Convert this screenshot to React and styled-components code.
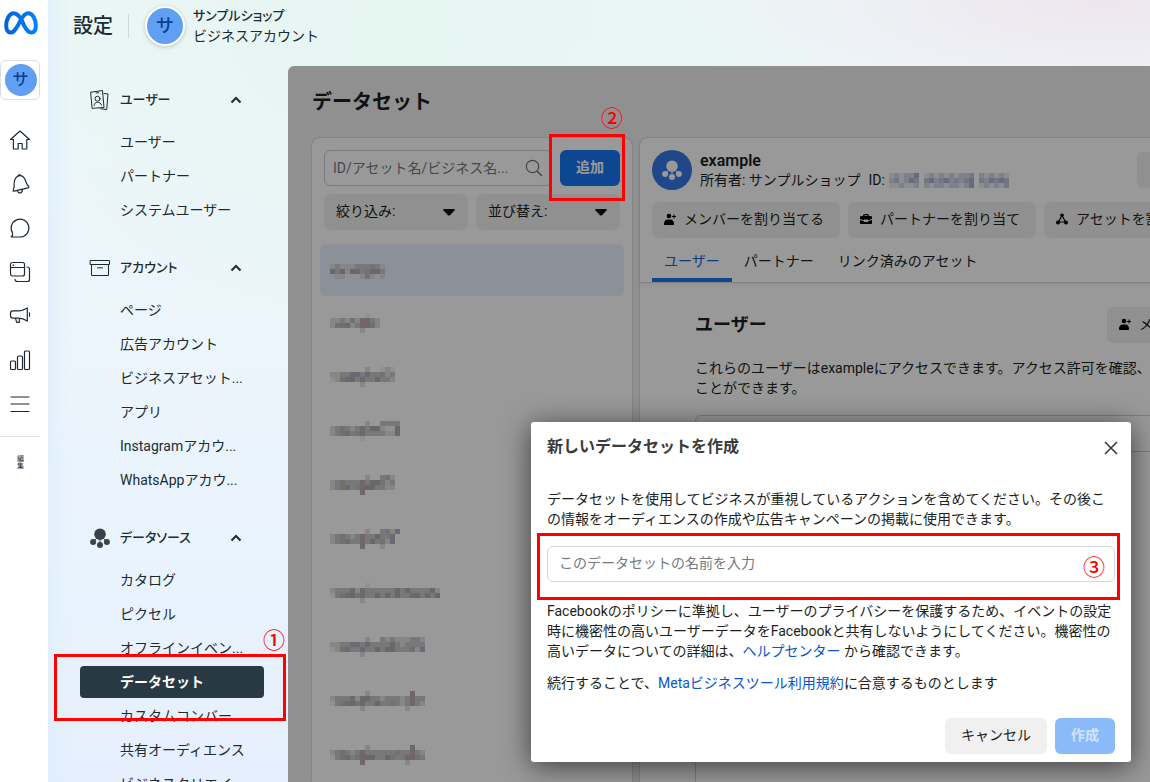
import React from "react";
import styled, { createGlobalStyle, css } from "styled-components";

const Global = createGlobalStyle`
  *, *::before, *::after { box-sizing: border-box; }
  body {
    margin: 0;
    overflow: hidden;
    font-family: Roboto, "Noto Sans CJK JP", sans-serif;
    font-size: 14px;
    line-height: 20px;
    color: #1c2b33;
  }
  button, input, select { font: inherit; color: inherit; margin: 0; }
  h1, h2, h3, p, ul { margin: 0; padding: 0; }
  ul { list-style: none; }
  a { color: #0a55c8; text-decoration: none; }
`;

const Page = styled.div`
  display: flex;
  height: 100vh;
  overflow: hidden;
`;

/* ---------- icon rail ---------- */

const Rail = styled.nav`
  flex: none;
  width: 48px;
  background: #fff;
`;

const RailLogo = styled.a`
  display: flex;
  align-items: center;
  justify-content: center;
  width: 42px;
  height: 46px;
  margin-bottom: 14px;
`;

const RailAccount = styled.button`
  display: grid;
  place-items: center;
  width: 40px;
  height: 40px;
  padding: 0 0 0 1px;
  margin-bottom: 18px;
  border: 1px solid #d9dfe5;
  border-radius: 6px;
  background: #fff;
`;

const Avatar = styled.span`
  display: grid;
  place-items: center;
  flex: none;
  width: ${(p) => p.$size}px;
  height: ${(p) => p.$size}px;
  border-radius: 50%;
  background: #619ff3;
  color: #0a3f94;
  font-size: ${(p) => p.$font}px;
  font-weight: 500;
  ${(p) =>
    p.$ring &&
    css`
      border: 2px solid #fff;
      box-shadow: 0 1px 4px rgba(0, 0, 0, 0.2);
    `}
`;

const RailLink = styled.a`
  display: grid;
  place-items: center;
  width: 40px;
  height: 44px;
  color: #1c2b33;
`;

const RailEdit = styled.button`
  display: block;
  width: 40px;
  padding: 19px 16px 0 17px;
  margin-top: 10px;
  border: 0;
  border-top: 1px solid #e2e5e8;
  background: none;
  font-size: 7px;
  line-height: 7px;
`;

/* ---------- page frame ---------- */

const Main = styled.div`
  display: flex;
  flex-direction: column;
  flex: 1;
  min-width: 0;
  background:
    linear-gradient(90deg, rgba(222, 238, 252, 0.7), rgba(235, 244, 254, 0) 24px),
    radial-gradient(420px 120px at 96% 0, #eee6ee, rgba(238, 230, 238, 0)),
    radial-gradient(460px 300px at 32% 4%, #e5f5f0, rgba(230, 246, 241, 0)),
    linear-gradient(#edf7f8, #ecf5fb 45%, #e9f3fe 75%, #e6effd);
`;

const TopBar = styled.header`
  display: flex;
  align-items: center;
  flex: none;
  height: 66px;
  padding: 0 24px 14px 25px;
`;

const TopTitle = styled.h1`
  padding-right: 15px;
  margin-right: 16px;
  border-right: 1px solid #ccd8de;
  font-size: 20px;
  line-height: 24px;
  font-weight: 500;
`;

const Account = styled.div`
  margin-left: 8px;
  line-height: 20px;
`;

const AccountName = styled.div`
  font-size: 13px;
  font-weight: 500;
  font-feature-settings: "palt";
`;

const Body = styled.div`
  display: flex;
  flex: 1;
  min-height: 0;
`;

/* ---------- settings menu ---------- */

const Menu = styled.nav`
  flex: none;
  width: 240px;
  padding: 8px 24px 0 32px;
`;

const Group = styled.section`
  margin-bottom: 16px;
`;

const GroupHead = styled.button`
  display: flex;
  align-items: center;
  width: 100%;
  height: 50px;
  padding: 1px 22px 0 8px;
  border: 0;
  background: none;
  font-size: 13px;
  font-weight: 500;
  text-align: left;
  font-feature-settings: "palt";

  span { flex: 1; padding-left: 8px; }
`;

const Item = styled.li`
  position: relative;
  padding-top: 2px;
`;

const ItemLink = styled.a`
  display: block;
  height: 32px;
  padding-left: 40px;
  border-radius: 4px;
  line-height: 32px;
  white-space: nowrap;
  color: #1c2b33;
  ${(p) =>
    p.$active &&
    css`
      background: #283943;
      color: #fff;
      font-weight: 700;
    `}
`;

/* ---------- numbered callouts ---------- */

const Callout = styled.div`
  position: absolute;
  z-index: 3;
  inset: ${(p) => p.$inset};
  border: 3px solid #f00;
  pointer-events: none;
`;

const Step = styled.span`
  position: absolute;
  z-index: 3;
  top: ${(p) => p.$top}px;
  right: ${(p) => p.$right}px;
  color: #f00;
  font-family: "Noto Sans CJK JP", sans-serif;
  font-size: 22px;
  line-height: 24px;
  font-weight: 500;
`;

/* ---------- data set panel ---------- */

const Panel = styled.main`
  position: relative;
  flex: 1;
  min-width: 1086px;
  display: flex;
  flex-direction: column;
  padding: 0 12px 0 24px;
  border-top-left-radius: 6px;
  background: #f1f1f1;
  color: #1c1e21;

  &::after {
    content: "";
    position: absolute;
    z-index: 2;
    inset: 0;
    border-top-left-radius: 6px;
    background: rgba(0, 0, 0, 0.4);
  }
`;

const PanelTitle = styled.h2`
  flex: none;
  height: 72px;
  font-size: 20px;
  line-height: 72px;
  font-weight: 700;
`;

const Columns = styled.div`
  display: flex;
  flex: 1;
  gap: 8px;
  min-height: 0;
`;

const Card = styled.section`
  border-radius: 8px 8px 0 0;
  background: #fff;
  box-shadow: 0 0 2px rgba(0, 0, 0, 0.3);
`;

const ListCard = styled(Card)`
  flex: none;
  width: 320px;
  padding: 12px 8px 0;
`;

const SearchRow = styled.div`
  display: flex;
  gap: 8px;
  padding: 0 4px;
`;

const SearchBox = styled.label`
  display: flex;
  align-items: center;
  flex: 1;
  height: 36px;
  padding: 0 8px;
  border: 1px solid #ccd0d5;
  border-radius: 6px;
  color: #70757b;

  input {
    flex: 1;
    min-width: 0;
    padding: 0;
    border: 0;
    outline: 0;
    background: none;
    text-overflow: ellipsis;
  }
  input::placeholder { color: #75797d; opacity: 1; }
`;

const AddWrap = styled.div`
  position: relative;
`;

const Button = styled.button`
  display: flex;
  align-items: center;
  justify-content: ${(p) => (p.$left ? "flex-start" : "center")};
  flex: none;
  gap: 8px;
  width: ${(p) => p.$width}px;
  height: 36px;
  padding: 0 0 2px ${(p) => (p.$left ? 12 : 0)}px;
  border: 0;
  border-radius: 6px;
  background: #f0f0f0;
  white-space: nowrap;
  ${(p) =>
    p.$primary &&
    css`
      background: #1877f2;
      color: #fff;
      font-weight: 700;
    `}
  &:disabled { background: #8bbaf8; color: #d1e3fc; }
`;

const Filters = styled.div`
  display: flex;
  gap: 8px;
  padding: 8px 4px 14px;
`;

const FilterBox = styled.div`
  display: grid;
  flex: 1;
  align-items: center;

  select, svg { grid-area: 1 / 1; }
  select {
    appearance: none;
    width: 100%;
    height: 36px;
    padding: 0 12px 2px;
    border: 0;
    border-radius: 6px;
    background: #f0f0f0;
  }
  svg { justify-self: end; margin-right: 13px; pointer-events: none; }
`;

const Asset = styled.li`
  height: 52px;
  margin-bottom: 2px;
  padding: 15px 10px;
  border-radius: 6px;
  background: ${(p) => (p.$active ? "#e9f1ff" : "none")};

  svg { display: block; }
`;

/* ---------- detail card ---------- */

const DetailCard = styled(Card)`
  flex: 1;
  min-width: 0;
`;

const DetailHead = styled.div`
  padding: 12px 12px 0;
  border-bottom: 1px solid #d8d8d8;
  box-shadow: 0 2px 4px rgba(0, 0, 0, 0.06);
`;

const Identity = styled.div`
  display: flex;
  align-items: center;
  gap: 8px;
  height: 40px;
  margin-bottom: 12px;
`;

const IdentityText = styled.div`
  flex: 1;
  line-height: 20px;

  h3 { font-size: 16px; line-height: 20px; font-weight: 600; }
`;

const OwnerLine = styled.div`
  display: flex;
  align-items: center;
  gap: 8px;

  span { display: flex; align-items: center; gap: 4px; height: 18px; }
`;

const Actions = styled.div`
  display: flex;
  gap: 8px;
`;

const Tabs = styled.div`
  display: flex;
  padding-top: 4px;
`;

const Tab = styled.button`
  height: 40px;
  padding: 2px 12px 0;
  border: 0;
  border-bottom: 4px solid ${(p) => (p.$active ? "#1877f2" : "transparent")};
  background: none;
  color: ${(p) => (p.$active ? "#1763cf" : "inherit")};
`;

const Users = styled.div`
  width: 600px;
  margin: 24px 0 0 55px;

  p { margin: 15px 0 17px; white-space: nowrap; }
`;

const UsersHead = styled.div`
  display: flex;
  align-items: center;
  justify-content: space-between;

  h3 { font-size: 18px; line-height: 34px; font-weight: 700; }
`;

const UsersTable = styled.div`
  width: 612px;
  height: 400px;
  border: 1px solid #d0d0d0;
  border-radius: 6px;

  &::before {
    content: "";
    display: block;
    height: 36px;
    border-bottom: 1px solid #d0d0d0;
  }
`;

/* ---------- dialog ---------- */

const Dialog = styled.div`
  position: absolute;
  z-index: 4;
  top: 356px;
  left: 243px;
  width: 600px;
  padding: 16px;
  padding-bottom: 8px;
  border-radius: 3px;
  background: #fff;
  box-shadow: 0 4px 28px rgba(0, 0, 0, 0.6);
`;

const DialogHead = styled.div`
  display: flex;
  justify-content: space-between;
  height: 20px;
  margin-bottom: 31px;

  h2 { font-size: 16px; line-height: 18px; font-weight: 700; color: #3a3b3d; }
  button {
    display: grid;
    place-items: center;
    width: 20px;
    height: 20px;
    margin-right: -6px;
    padding: 0;
    border: 0;
    background: none;
  }
`;

const Field = styled.div`
  position: relative;
  margin: 17px 0 19px;

  input {
    display: block;
    width: 568px;
    height: 36px;
    padding: 0 11px 2px;
    border: 1px solid #d3d6da;
    border-radius: 6px;
    background: #fff;
    outline: 0;
  }
  input::placeholder { color: #75797d; opacity: 1; }
`;

const Terms = styled.p`
  && { margin-top: 12px; }
`;

const DialogFoot = styled.div`
  display: flex;
  justify-content: flex-end;
  gap: 8px;
  margin-top: 25px;
`;

/* ---------- drawings ---------- */

const Icon = ({ size = 22, children, ...rest }) => (
  <svg width={size} height={size} viewBox="0 0 22 22" fill="none" stroke="currentColor"
    strokeWidth="1.2" strokeLinejoin="round" strokeLinecap="round" aria-hidden="true" {...rest}>
    {children}
  </svg>
);

const MetaLogo = () => (
  <svg width="34" height="24" viewBox="0 0 34 24" fill="none" aria-hidden="true">
    <defs>
      <linearGradient id="metaBlue" x1="0" x2="1">
        <stop offset="0" stopColor="#0064e0" />
        <stop offset="1" stopColor="#0082fb" />
      </linearGradient>
    </defs>
    <path
      d="M17 7.6C14.4 4 12.4 2.2 9.6 2.2 5.4 2.2 2.2 8.4 2.2 14.8c0 4 1.6 6.8 4.4 6.8 2.6 0 4.2-1.8 7.4-7.4l3-5.6c2.4-4.2 4.4-6.4 7.4-6.4 4.2 0 7.4 6.2 7.4 12.6 0 4.2-1.6 6.8-4.4 6.8-2.7 0-4.3-1.8-7.4-7.2L17 7.6Z"
      stroke="url(#metaBlue)" strokeWidth="4" strokeLinejoin="round" />
  </svg>
);

const railIcons = [
  ["ホーム", <><path d="M1.5 10.5 11 2l9.500 8.500h-2.700V20h-4.600v-5.500H9.200V20H4.400v-9.500Z" /></>],
  ["お知らせ", <><path d="M4.200 17.300c.8-1.500 1-3 .9-5.300C5 7 6.400 3.800 9.700 2.900c3.300-.8 5.500 1.100 7 5.300.7 2.200 1.600 4 3 5.300.5.6.2 1.200-.5 1.400L5 18.200c-.7.2-1.200-.3-.8-.9ZM9 2.900c.2-1.100 2-1.600 2.600-.5M8.500 17.600c.5 3.600 5 2.800 4.900-1.100" /></>],
  ["メッセージ", <><path d="M3.600 16A8.900 8.900 0 1 1 11 20H2.200c1.100-.9 1.700-2.200 1.400-4Z" /></>],
  ["投稿", <><rect x="1.500" y="1.500" width="14" height="13.500" rx="2" /><path d="M1.500 6.500h14M4 4.200h.6M18 6c1.400 0 2.500.7 2.500 2v10.500c0 1.300-.7 2-2 2H8.500c-1.300 0-2.500-.7-2.500-2.200" /></>],
  ["広告", <><path d="M1.500 8.500c0-2 .8-2.700 2.500-2.700h5.500c3.500 0 6-1 8.800-2.800V16c-2.800-1.800-5.300-2.800-8.800-2.800H4c-1.700 0-2.500-.7-2.500-2.700ZM20.500 7.800v3.400M6.500 13.300l1.200 4h2.600v-4" /></>],
  ["レポート", <><rect x="1.500" y="12" width="5" height="8.500" rx="1" /><rect x="8.500" y="7" width="5" height="13.500" rx="1" /><rect x="15.500" y="2" width="5" height="18.500" rx="1" /></>],
  ["すべてのツール", <><path d="M2 4h18M2 11h18M2 18.500h18" /></>],
];

const BadgeIcon = () => (
  <Icon size={24} viewBox="-1 -1 24 24" strokeWidth="1">
    <path d="M2 3.200 13.500 1.500 15 18.500l-11.500.8ZM15 4.500l4 .5-1.300 15.500-6-.7M7 4l2.600-.3M5 16.500c.6-4.300 6.500-4.600 7.500-.4" />
    <circle cx="8.500" cy="9.700" r="2.500" />
  </Icon>
);

const BoxIcon = () => (
  <Icon size={24} viewBox="-1 -1 24 24" strokeWidth="1" strokeLinejoin="miter">
    <path d="M1.500 3.500h19v4h-19ZM2.500 7.500v11h17v-11M8.500 10.800h5" />
  </Icon>
);

const DataSetShape = ({ width, color }) => (
  <svg width={width} height={width} viewBox="0 0 20 20" fill={color} stroke={color} aria-hidden="true">
    <circle cx="10" cy="6.200" r="5.800" stroke="none" />
    <circle cx="3.100" cy="14" r="3" stroke="none" />
    <circle cx="16.900" cy="14" r="3" stroke="none" />
    <circle cx="10" cy="17" r="3" stroke="none" />
    <path d="M4 13 7 10M16 13l-3-3M10 12v3" strokeWidth="1" />
  </svg>
);

const SourceMark = styled.i`
  display: grid;
  place-items: center;
  width: 24px;
`;

const DataSetBadge = styled.span`
  display: grid;
  place-items: center;
  width: 40px;
  height: 40px;
  border-radius: 50%;
  background: #3577e5;
`;

const Chevron = () => (
  <svg width="12" height="8" viewBox="0 0 12 8" fill="none" stroke="currentColor" strokeWidth="2" aria-hidden="true">
    <path d="m1.500 6.500 4.500-4.500 4.500 4.500" />
  </svg>
);

const Caret = () => (
  <svg width="12" height="7" viewBox="0 0 12 7" fill="#111" aria-hidden="true">
    <path d="M1 0h10c1 0 1.200.8.500 1.500L7 6.200c-.6.600-1.400.6-2 0L.5 1.500C-.2.800 0 0 1 0Z" />
  </svg>
);

const SearchIcon = () => (
  <svg width="18" height="18" viewBox="0 0 18 18" fill="none" stroke="currentColor" strokeWidth="1.2" aria-hidden="true">
    <circle cx="7.500" cy="7.500" r="6.200" />
    <path d="m12 12 5 5" strokeWidth="1.600" />
  </svg>
);

const PersonAdd = () => (
  <svg width="12" height="14" viewBox="0 0 12 14" fill="#000" aria-hidden="true">
    <circle cx="5" cy="4" r="2.300" />
    <path d="M0 12c0-3 1.500-4.500 3.500-4.500h3c2 0 3.500 1.500 3.500 4.500 0 .7-.3 1-1 1H1c-.7 0-1-.3-1-1ZM9.500 2.500h1v1.500H12v1h-1.500v1.500h-1V5H8V4h1.500Z" />
  </svg>
);

const Briefcase = () => (
  <svg width="12" height="12" viewBox="0 0 12 12" fill="#000" aria-hidden="true">
    <path fillRule="evenodd" d="M3 3c0-1.300.7-2 2-2h2c1.300 0 2 .7 2 2h1.500c1 0 1.500.5 1.500 1.500V6L8 7.200V6.500H4v.7L0 6V4.500C0 3.500.5 3 1.500 3Zm1.200 0h3.600c0-.5-.3-.8-.8-.8H5c-.5 0-.8.300-.8.800ZM0 7l4 1.200V9h4v-.8L12 7v3c0 .7-.3 1-1 1H1c-.7 0-1-.3-1-1Z" />
  </svg>
);

const AssetsIcon = () => (
  <svg width="12" height="12" viewBox="0 0 12 12" fill="#000" stroke="#000" aria-hidden="true">
    <path d="M6 2.500 2.500 9h7Z" fill="none" strokeWidth="1.200" />
    <circle cx="6" cy="2.300" r="1.800" stroke="none" />
    <circle cx="2" cy="9.500" r="2" stroke="none" />
    <circle cx="10" cy="9.500" r="2" stroke="none" />
  </svg>
);

/* Tones of the pixelated names, one letter for each block. */
const tones = {
  a: "#f2f2f2", b: "#e0e0e2", c: "#c9c9cb", d: "#adaeb0",
  n: "#b0b1c4", m: "#bdaab2", o: "#c2bbaf", g: "#b8c2bd",
  p: "#ebecf5", q: "#d3d6ea", r: "#aeb2d2", s: "#c1c5dd",
};

const Mosaic = ({ rows, label }) => (
  <svg width={Math.max(...rows.map((r) => r.length)) * 5} height={rows.length * 5}
    role="img" aria-label={label} shapeRendering="crispEdges">
    {rows.flatMap((row, y) =>
      [...row].map((tone, x) =>
        tones[tone] ? <rect key={`${x}-${y}`} x={x * 5} y={y * 5} width="5" height="5" fill={tones[tone]} /> : null
      )
    )}
  </svg>
);

const assets = [
  ["", "bcbbbcccgcb", "dcdbdmcgddc", ".bb...bgb.b"],
  [".......a..", "bbcbgbmmcb", "bgonbcmmob", "......b..."],
  [".......b..aba", "bbccnncmccgbc", "abondcmccdccb", "......b......"],
  [".......b..cccc", "bcocbcmcddbaad", "bconcgmccccbbd", "......a......."],
  [".......b..cgb", "bcocccmcddgbc", "bconcgmddccbb", "......m......"],
  [".......b..cgbn", "bcocbcmccdccn", "bcgnccmcdcgbn", "......m...b.."],
  [".......a..............", "bcccnbmccccccdcdccccdb", "acondgmccdcdcdccmdcdcd", "......b..............."],
  [".......b..cbcbbbccb", "bbccnncmccccdcbcccc", "abonccmccdcddcccobn", "......b............"],
  [".......b........m..", "bcccnbmdccbcccbcmcc", "acondgmccdccgcbcmcb", "......b........b..."],
  [".......b........m..", "bcocbcmccccccgccmcb", "aconcgmddccdgccmmgc", "......m........b..."],
];

const idRows = [
  "pqpqqr.pqpqpqpqqs.qpqpqp",
  "qspqrs.srqsrqsqsr.sqrsrs",
  "ppqppq.qpqqpqqpqr.pqpqps",
];

const groups = [
  { title: "ユーザー", icon: <BadgeIcon />, items: ["ユーザー", "パートナー", "システムユーザー"] },
  {
    title: "アカウント", icon: <BoxIcon />,
    items: ["ページ", "広告アカウント", "ビジネスアセット...", "アプリ", "Instagramアカウ...", "WhatsAppアカウ..."],
  },
  {
    title: "データソース", icon: <SourceMark><DataSetShape width={20} color="#3b4147" /></SourceMark>,
    items: ["カタログ", "ピクセル", "オフラインイベン...", "データセット", "カスタムコンバー", "共有オーディエンス", "ビジネスクリエイ"],
  },
];

export default function App() {
  return (
    <Page>
      <Global />
      <Rail aria-label="ツール">
        <RailLogo href="#" aria-label="Meta"><MetaLogo /></RailLogo>
        <RailAccount><Avatar $size={32} $font={16}>サ</Avatar></RailAccount>
        {railIcons.map(([label, drawing]) => (
          <RailLink key={label} href="#" aria-label={label}><Icon>{drawing}</Icon></RailLink>
        ))}
        <RailEdit>編集</RailEdit>
      </Rail>

      <Main>
        <TopBar>
          <TopTitle>設定</TopTitle>
          <Avatar $size={40} $font={18} $ring>サ</Avatar>
          <Account>
            <AccountName>サンプルショップ</AccountName>
            <div>ビジネスアカウント</div>
          </Account>
        </TopBar>

        <Body>
          <Menu aria-label="設定">
            {groups.map((group) => (
              <Group key={group.title}>
                <GroupHead aria-expanded="true">
                  {group.icon}
                  <span>{group.title}</span>
                  <Chevron />
                </GroupHead>
                <ul>
                  {group.items.map((item) => {
                    const active = item === "データセット";
                    return (
                      <Item key={item}>
                        <ItemLink href="#" $active={active}>{item}</ItemLink>
                        {active && <Callout $inset="-10px -22px -23px -26px" />}
                        {active && <Step $top={-38} $right={-21}>①</Step>}
                      </Item>
                    );
                  })}
                </ul>
              </Group>
            ))}
          </Menu>

          <Panel>
            <PanelTitle>データセット</PanelTitle>
            <Columns>
              <ListCard>
                <SearchRow>
                  <SearchBox>
                    <input type="search" aria-label="検索" placeholder="ID/アセット名/ビジネス名..." />
                    <SearchIcon />
                  </SearchBox>
                  <AddWrap>
                    <Button $primary $width={60}>追加</Button>
                    <Callout $inset="-16px -5px -15px -11px" />
                    <Step $top={-46} $right={-3}>②</Step>
                  </AddWrap>
                </SearchRow>
                <Filters>
                  <FilterBox>
                    <select aria-label="絞り込み"><option>絞り込み:</option></select>
                    <Caret />
                  </FilterBox>
                  <FilterBox>
                    <select aria-label="並び替え"><option>並び替え:</option></select>
                    <Caret />
                  </FilterBox>
                </Filters>
                <ul>
                  {assets.map((rows, i) => (
                    <Asset key={i} $active={i === 0}><Mosaic rows={rows} label="データセット名" /></Asset>
                  ))}
                </ul>
              </ListCard>

              <DetailCard>
                <DetailHead>
                  <Identity>
                    <DataSetBadge><DataSetShape width={20} color="#fff" /></DataSetBadge>
                    <IdentityText>
                      <h3>example</h3>
                      <OwnerLine>
                        <span>所有者: サンプルショップ</span>
                        <span>ID: <Mosaic rows={idRows} label="データセットID" /></span>
                      </OwnerLine>
                    </IdentityText>
                    <Button $width={213} aria-label="その他の操作" />
                  </Identity>
                  <Actions>
                    <Button $left $width={188}><PersonAdd />メンバーを割り当てる</Button>
                    <Button $left $width={188}><Briefcase />パートナーを割り当て</Button>
                    <Button $left $width={188}><AssetsIcon />アセットを割り当て</Button>
                  </Actions>
                  <Tabs role="tablist">
                    <Tab role="tab" aria-selected="true" $active>ユーザー</Tab>
                    <Tab role="tab">パートナー</Tab>
                    <Tab role="tab">リンク済みのアセット</Tab>
                  </Tabs>
                </DetailHead>
                <Users>
                  <UsersHead>
                    <h3>ユーザー</h3>
                    <Button $left $width={188}><PersonAdd />メンバーを割り当てる</Button>
                  </UsersHead>
                  <p>
                    これらのユーザーはexampleにアクセスできます。アクセス許可を確認、
                    <br />
                    ことができます。
                  </p>
                  <UsersTable />
                </Users>
              </DetailCard>
            </Columns>

            <Dialog role="dialog" aria-labelledby="dialog-title">
              <DialogHead>
                <h2 id="dialog-title">新しいデータセットを作成</h2>
                <button aria-label="閉じる">
                  <svg width="14" height="14" viewBox="0 0 14 14" stroke="#333" strokeWidth="1.500" aria-hidden="true">
                    <path d="m1 1 12 12M13 1 1 13" />
                  </svg>
                </button>
              </DialogHead>
              <p>データセットを使用してビジネスが重視しているアクションを含めてください。その後この情報をオーディエンスの作成や広告キャンペーンの掲載に使用できます。</p>
              <Field>
                <input type="text" aria-label="データセットの名前" placeholder="このデータセットの名前を入力" />
                <Callout $inset="-13px -5px -18px -10px" />
                <Step $top={7} $right={10}>③</Step>
              </Field>
              <p>
                Facebookのポリシーに準拠し、ユーザーのプライバシーを保護するため、イベントの設定時に機密性の高いユーザーデータをFacebookと共有しないようにしてください。機密性の高いデータについての詳細は、<a href="#">ヘルプセンター</a> から確認できます。
              </p>
              <Terms>続行することで、<a href="#">Metaビジネスツール利用規約</a>に合意するものとします</Terms>
              <DialogFoot>
                <Button $width={102}>キャンセル</Button>
                <Button $primary $width={60} disabled>作成</Button>
              </DialogFoot>
            </Dialog>
          </Panel>
        </Body>
      </Main>
    </Page>
  );
}
